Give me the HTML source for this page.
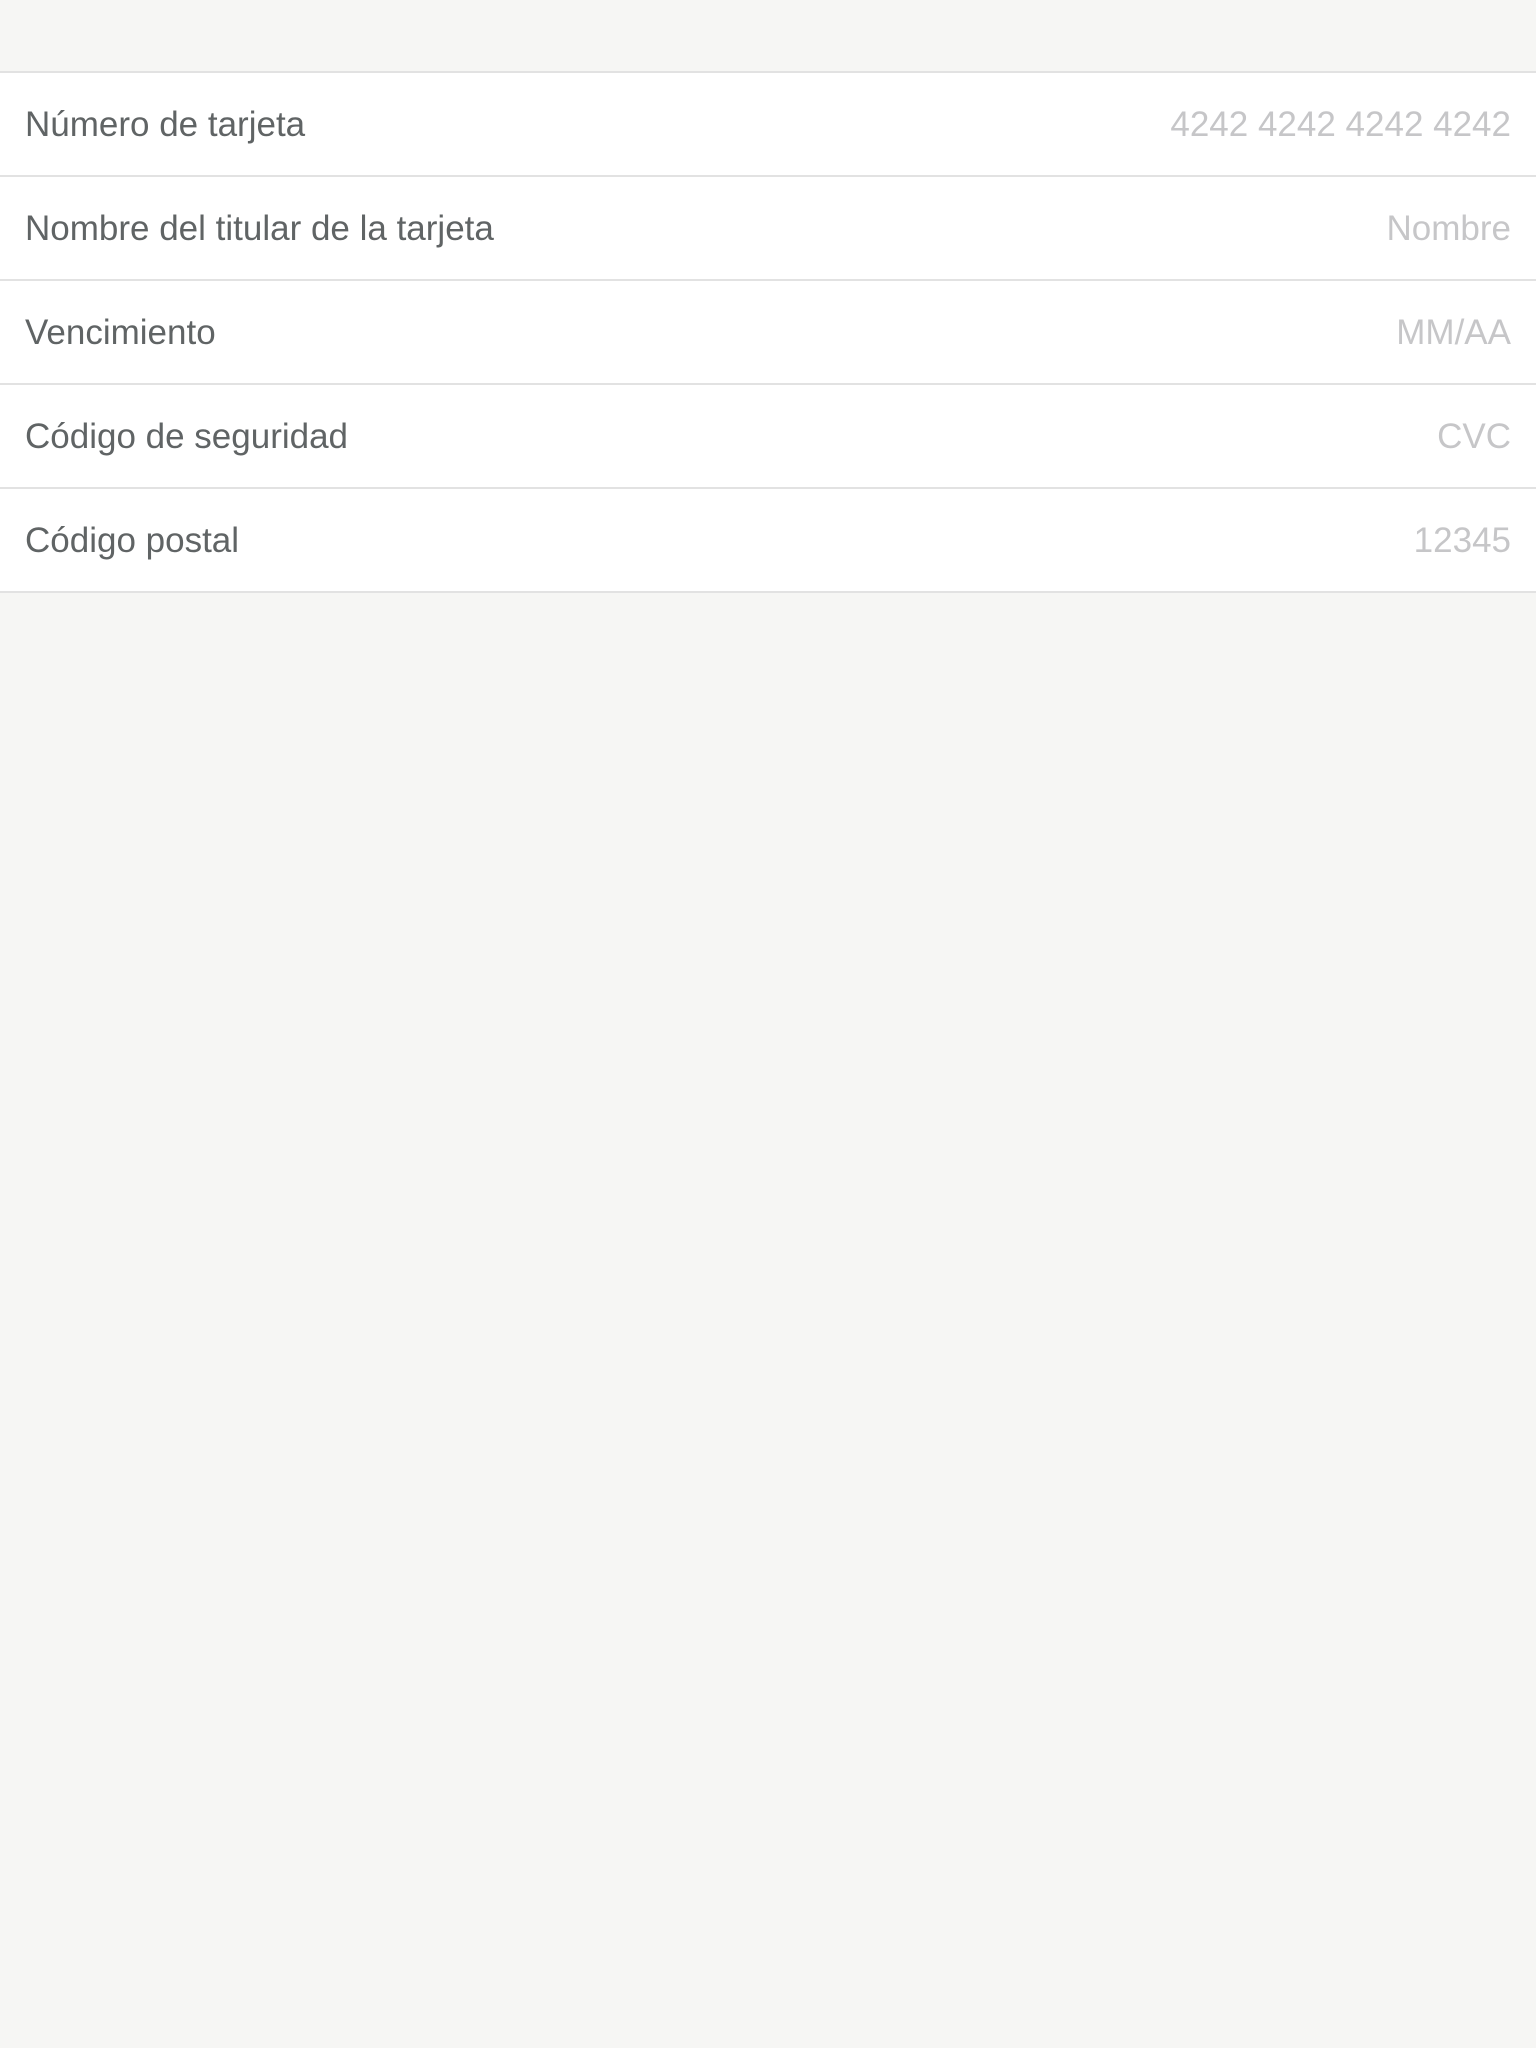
<!DOCTYPE html>
<html><head><meta charset="utf-8"><style>
html,body{margin:0;padding:0;width:1536px;height:2048px;background:#f6f6f4;font-family:"Liberation Sans",sans-serif;overflow:hidden}
.list{position:absolute;top:71px;left:0;width:1536px;background:#fff;border-top:2px solid #e2e2e2}
.row{height:102px;border-bottom:2px solid #e2e2e2;display:flex;align-items:center;justify-content:space-between;padding:2px 25px 0;box-sizing:border-box;height:104px;font-size:35px}
.l{color:#606465}.r{color:#c6c6c8}
</style></head><body>
<div class="list">
<div class="row"><span class="l">Número de tarjeta</span><span class="r">4242 4242 4242 4242</span></div>
<div class="row"><span class="l">Nombre del titular de la tarjeta</span><span class="r">Nombre</span></div>
<div class="row"><span class="l">Vencimiento</span><span class="r">MM/AA</span></div>
<div class="row"><span class="l">Código de seguridad</span><span class="r">CVC</span></div>
<div class="row"><span class="l">Código postal</span><span class="r">12345</span></div>
</div>
</body></html>
